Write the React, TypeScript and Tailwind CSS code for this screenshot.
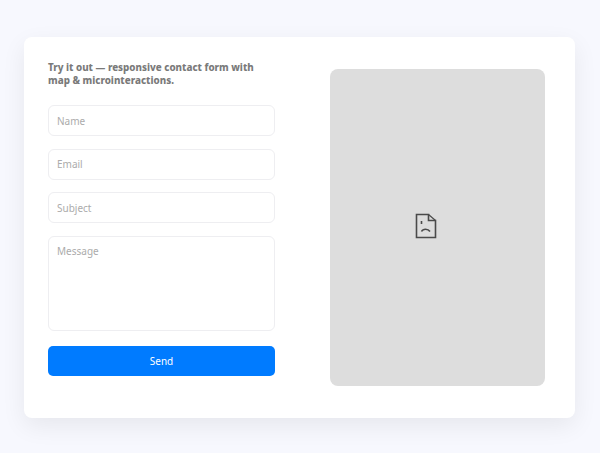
import React from 'react';

const Field = ({ placeholder }: { placeholder: string }) => (
  <input
    placeholder={placeholder}
    className="w-full h-[31px] rounded-[6px] border border-[#eeeef1] bg-white px-2 text-[10px] outline-none placeholder:text-[#ababab]"
  />
);

export default function App() {
  return (
    <div className="w-full h-[453px] bg-[#f7f8fe] pt-[37px] px-6 font-['Noto_Sans',sans-serif]">
      <div className="h-[381px] w-[551px] rounded-[8px] bg-white shadow-[0_8px_24px_rgba(0,0,0,0.07)] pl-6 pr-[30px] pt-6 flex gap-[55px]">
        {/* Form column */}
        <div className="w-[227px] flex flex-col">
          <p className="text-[9.8px] leading-[13px] font-extrabold text-[#7a7a7a] mb-[18px]">
            Try it out — responsive contact form with map &amp; microinteractions.
          </p>
          <div className="flex flex-col gap-[12.7px]">
            <Field placeholder="Name" />
            <Field placeholder="Email" />
            <Field placeholder="Subject" />
            <textarea
              placeholder="Message"
              className="w-full h-[95px] rounded-[6px] border border-[#eeeef1] bg-white px-2 py-[7px] text-[10px] outline-none resize-none placeholder:text-[#ababab]"
            />
          </div>
          <button className="mt-[15px] h-[30px] w-full rounded-[5px] bg-[#007bff] text-[10px] text-white">
            Send
          </button>
        </div>
        {/* Map placeholder */}
        <div className="mt-2 h-[317px] w-[215px] rounded-[8px] bg-[#dddddd] flex items-center justify-center">
          <svg className="mr-[23px] mb-[4px]" width="22" height="26" viewBox="0 0 22 26" fill="none" stroke="#4a4a4a" strokeWidth="1.6">
            <path d="M1.5 1.5H13.5V7.5H20.5V24.5H1.5Z" />
            <path d="M13.5 1.5L20.5 7.5" strokeWidth="1.2" />
            <path d="M6.5 8V11" />
            <path d="M6.5 18.5C8 15.5 13 15.5 15 18.5" />
          </svg>
        </div>
      </div>
    </div>
  );
}
